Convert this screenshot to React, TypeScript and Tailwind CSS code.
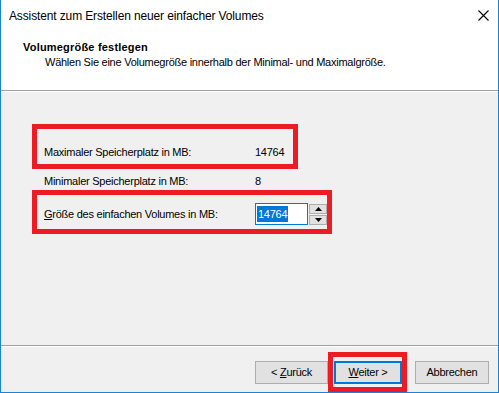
import React from "react";

const font = { fontFamily: '"Liberation Sans", Arial, sans-serif' };

function Spin() {
  return (
    <div className="flex flex-col gap-px ml-[1px]">
      <div className="w-[18px] h-[10px] bg-[#e1e1e1] border border-[#adadad] flex items-center justify-center">
        <svg width="7" height="4" viewBox="0 0 7 4"><polygon points="3.5,0 7,4 0,4" fill="#000" /></svg>
      </div>
      <div className="w-[18px] h-[10px] bg-[#e1e1e1] border border-[#adadad] flex items-center justify-center">
        <svg width="7" height="4" viewBox="0 0 7 4"><polygon points="0,0 7,0 3.5,4" fill="#000" /></svg>
      </div>
    </div>
  );
}

export default function App() {
  return (
    <div className="w-[499px] h-[393px] flex flex-col bg-[#f0f0f0] border-l border-r border-b border-[#1883d7] text-[11px] tracking-[-0.25px] text-black" style={font}>
      <div className="bg-white h-[90px] flex flex-col">
        <div className="h-[31px] flex items-center justify-between pl-[8px] pr-[9px]">
          <span className="text-[12px] tracking-[-0.13px]">Assistent zum Erstellen neuer einfacher Volumes</span>
          <svg width="11" height="11" viewBox="0 0 11 11">
            <path d="M0.5 0.5 L10.5 10.5 M10.5 0.5 L0.5 10.5" stroke="#000" strokeWidth="1.1" />
          </svg>
        </div>
        <div className="pl-[22px] pt-[9px] leading-[15px]">
          <div className="font-bold tracking-[0.2px]">Volumegröße festlegen</div>
          <div className="pl-[22px]">Wählen Sie eine Volumegröße innerhalb der Minimal- und Maximalgröße.</div>
        </div>
      </div>
      <div className="h-px bg-[#a0a0a0]" />
      <div className="h-px bg-white" />
      <div className="flex-1 relative pl-[43px]">
        <div className="mt-[52px] h-[16px] flex items-center">
          <span className="w-[211px]">Maximaler Speicherplatz in MB:</span>
          <span>14764</span>
        </div>
        <div className="mt-[13px] h-[16px] flex items-center">
          <span className="w-[211px]">Minimaler Speicherplatz in MB:</span>
          <span>8</span>
        </div>
        <div className="mt-[14px] h-[22px] flex items-center">
          <span className="w-[211px]"><span className="underline">G</span>röße des einfachen Volumes in MB:</span>
          <div className="w-[53px] h-[22px] bg-white border border-[#0078d7] flex items-center pl-[1px]">
            <span className="bg-[#0078d7] text-white px-px leading-[16px]">14764</span>
          </div>
          <Spin />
        </div>
        <div className="absolute left-[31px] top-[32px] w-[266px] h-[45px] border-[5px] border-[#ed1c24]" />
        <div className="absolute left-[31px] top-[98px] w-[300px] h-[44px] border-[5px] border-[#ed1c24]" />
      </div>
      <div className="h-px bg-[#a0a0a0]" />
      <div className="h-px bg-white" />
      <div className="h-[45px] relative flex items-start pt-[14px] pl-[254px]">
        <button className="w-[73px] h-[23px] bg-[#e1e1e1] border border-[#adadad]">&lt; <span className="underline">Z</span>urück</button>
        <button className="ml-[6px] w-[68px] h-[23px] bg-[#e1e1e1] border-2 border-[#0078d7]"><span className="underline">W</span>eiter &gt;</button>
        <button className="ml-[13px] w-[74px] h-[23px] bg-[#e1e1e1] border border-[#adadad]">Abbrechen</button>
        <div className="absolute left-[327px] top-[5px] w-[79px] h-[40px] border-[5px] border-[#ed1c24]" />
      </div>
    </div>
  );
}
